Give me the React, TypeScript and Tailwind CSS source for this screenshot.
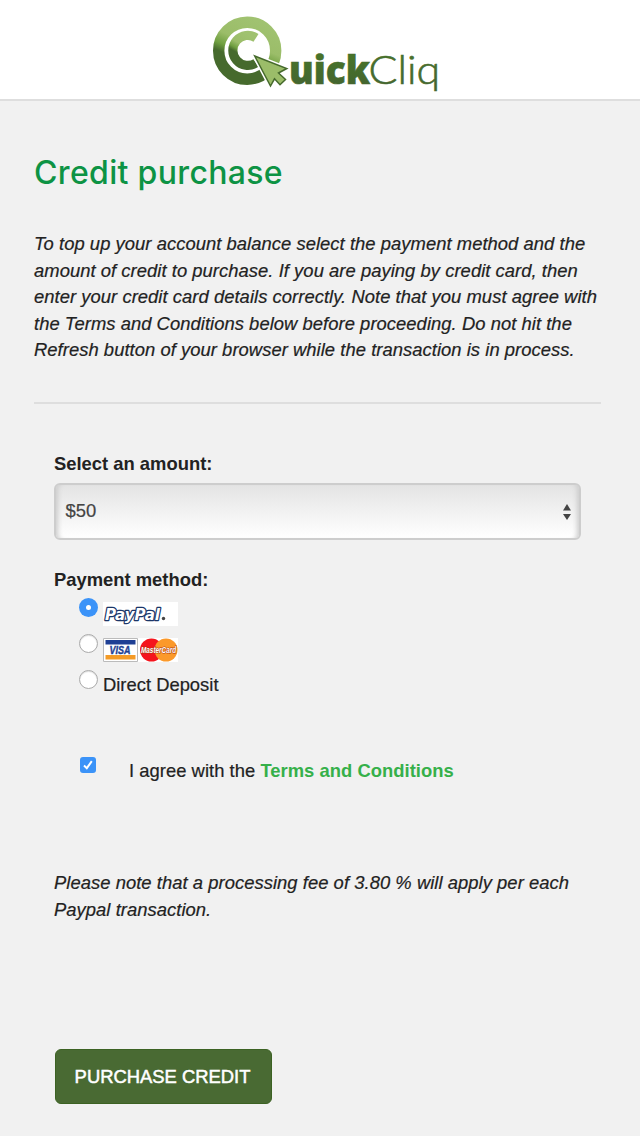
function Logo() {
  return (
    <svg width="232" height="82" viewBox="210 12 232 82" role="img" aria-label="QuickCliq">
      <defs>
        <linearGradient id="ring" x1="0.72" y1="0" x2="0.3" y2="1">
          <stop offset="0" stopColor="#a0c270" />
          <stop offset="0.38" stopColor="#9bbd69" />
          <stop offset="0.56" stopColor="#6f9f40" />
          <stop offset="0.68" stopColor="#466a2d" />
          <stop offset="1" stopColor="#466a2d" />
        </linearGradient>
        <linearGradient id="word" x1="0" y1="0" x2="0" y2="1">
          <stop offset="0.3" stopColor="#47732a" />
          <stop offset="0.8" stopColor="#446530" />
        </linearGradient>
      </defs>
      <circle cx="247.2" cy="50.7" r="28.5" fill="none" stroke="url(#ring)" strokeWidth="11.4" />
      <path d="M256 37.8A15 15 0 1 0 256 63" fill="none" stroke="url(#ring)" strokeWidth="9.2" />
      <path d="M254.700 56L286.800 68.500L278.500 73L285.500 79.500L280 84.700L274.500 78.800L270.500 86Z" fill="#9bbd69" stroke="#fff" strokeWidth="4.500" />
      <path d="M254.700 56L286.800 68.500L278.500 73L285.500 79.500L280 84.700L274.500 78.800L270.500 86Z" fill="#9bbd69" stroke="#466a2d" strokeWidth="1.500" />
      <text x="289" y="84.300" textLength="81" lengthAdjust="spacingAndGlyphs" fill="url(#word)" stroke="#466a2d" strokeWidth="0.600" className="font-['Open_Sans'] text-[39px] font-extrabold">uick</text>
      <text x="368.500" y="84.300" textLength="71.500" lengthAdjust="spacingAndGlyphs" fill="url(#word)" stroke="#466a2d" strokeWidth="0.600" className="font-['Lato'] text-[39px] font-light">Cliq</text>
    </svg>
  );
}

function PayPal() {
  return (
    <svg width="75" height="24" viewBox="0 0 75 24" className="bg-white">
      <text x="2" y="17.500" textLength="55" lengthAdjust="spacingAndGlyphs" fill="#fff" stroke="#1b3668" strokeWidth="2.600" paintOrder="stroke" strokeLinejoin="round" className="font-['DejaVu_Sans'] text-[16px] font-bold italic">PayPal</text>
      <circle cx="60.500" cy="16.500" r="1.700" fill="#444" />
    </svg>
  );
}

function Cards() {
  return (
    <svg width="75" height="24" viewBox="0 0 75 24" className="bg-white">
      <path d="M.5.5H34.500V23.500H.5Z" fill="#fff" stroke="#bbb" />
      <path d="M2.500 2H32.500V6.500H2.500Z" fill="#1e3f94" />
      <path d="M2.500 17H32.500V21.500H2.500Z" fill="#f49b27" />
      <text x="6.500" y="16" textLength="21" lengthAdjust="spacingAndGlyphs" fill="#1e3f94" stroke="#1e3f94" strokeWidth="0.400" className="font-['Liberation_Sans'] text-[11px] font-bold italic">VISA</text>
      <circle cx="48.500" cy="12" r="11.500" fill="#f5141d" />
      <circle cx="63" cy="12" r="11.500" fill="#fb992a" />
      <text x="38" y="11.500" transform="scale(1 1.300)" fill="#fff" stroke="#b03a10" strokeWidth="0.800" paintOrder="stroke" className="font-['Liberation_Sans'] text-[6.400px] font-bold italic">MasterCard</text>
    </svg>
  );
}

function Radio({ checked }: { checked?: boolean }) {
  return (
    <span
      className={
        checked
          ? "flex size-[19px] shrink-0 items-center justify-center rounded-full bg-[#3b93f8]"
          : "flex size-[19px] shrink-0 rounded-full border border-[#aaa] bg-white shadow-[inset_0_1px_1px_#ddd]"
      }
    >
      {checked && <span className="size-[5px] rounded-full bg-white" />}
    </span>
  );
}

const INTRO = [
  "To top up your account balance select the payment method and the",
  "amount of credit to purchase. If you are paying by credit card, then",
  "enter your credit card details correctly. Note that you must agree with",
  "the Terms and Conditions below before proceeding. Do not hit the",
  "Refresh button of your browser while the transaction is in process.",
];

export default function App() {
  return (
    <div className="flex h-[1136px] w-[640px] flex-col overflow-hidden bg-[#f1f1f1] font-['Liberation_Sans',sans-serif] text-[18.4px] leading-[26.5px] text-[#222]">
      <header className="flex h-[101px] shrink-0 justify-center border-b-2 border-[#dedede] bg-white pt-3 pl-3">
        <Logo />
      </header>
      <main className="flex flex-col px-[34px] pt-[52px]">
        <h1 className="h-10 font-['Inter'] text-[32px] leading-10 font-medium tracking-[0.33px] whitespace-nowrap text-[#0d9344]">Credit purchase</h1>
        <div className="mt-[38px] h-[133px] tracking-[0.045px] whitespace-nowrap italic [-webkit-text-stroke:0.2px]">
          {INTRO.map((line) => (
            <p key={line}>{line}</p>
          ))}
        </div>
        <hr className="mt-[38px] w-[567px] border-t-2 border-[#dedede]" />
        <form className="flex flex-col pl-5">
          <label className="mt-[46.500px] font-bold">Select an amount:</label>
          <div className="mt-[6px] flex h-[57px] w-[527px] items-center justify-between rounded-md border-2 border-[#cdcdcd] bg-linear-to-b from-[#e4e4e4] to-white pr-[7px] pl-[9.500px] text-[#444] shadow-[inset_6px_0_5px_-4px_#ccc,inset_-6px_0_5px_-4px_#ccc]">
            <span className="[-webkit-text-stroke:0.2px]">$50</span>
            <svg width="10" height="18" viewBox="0 0 10 18" fill="#444">
              <path d="M5 1L9 7.500H1Z" />
              <path d="M5 17L9 11H1Z" />
            </svg>
          </div>
          <p className="mt-[26.500px] font-bold">Payment method:</p>
          <div className="flex h-9 gap-[5px] pt-[5px] pl-[25px]">
            <Radio checked />
            <span className="pt-1"><PayPal /></span>
          </div>
          <div className="flex h-9 gap-[5px] pt-[5px] pl-[25px]">
            <Radio />
            <span className="pt-1"><Cards /></span>
          </div>
          <div className="flex h-9 gap-[5px] pt-[5px] pl-[25px]">
            <Radio />
            <span className="pt-[2px] [-webkit-text-stroke:0.2px]">Direct Deposit</span>
          </div>
          <div className="mt-[56px] flex h-[27px] pl-[26px]">
            <span className="flex size-4 items-center justify-center rounded-[3px] bg-[#3b93f8]">
              <svg width="12" height="12" viewBox="0 0 12 12" fill="none" stroke="#fff" strokeWidth="2">
                <path d="M2 6.500L4.800 9.200L9.800 2.200" />
              </svg>
            </span>
            <span className="ml-[33px] pt-px tracking-[0.03px]">
              <span className="[-webkit-text-stroke:0.2px]">I agree with the </span>
              <a className="font-bold text-[#36b04a]">Terms and Conditions</a>
            </span>
          </div>
          <div className="mt-[86px] tracking-[0.045px] whitespace-nowrap italic [-webkit-text-stroke:0.2px]">
            <p>Please note that a processing fee of 3.80 % will apply per each</p>
            <p>Paypal transaction.</p>
          </div>
          <button type="button" className="mt-[126px] ml-px h-[55px] w-[217px] rounded-md border border-[#3c6223] bg-[#496a33] pt-[2px] pr-[2px] whitespace-nowrap text-white [-webkit-text-stroke:0.5px]">
            PURCHASE CREDIT
          </button>
        </form>
      </main>
    </div>
  );
}
